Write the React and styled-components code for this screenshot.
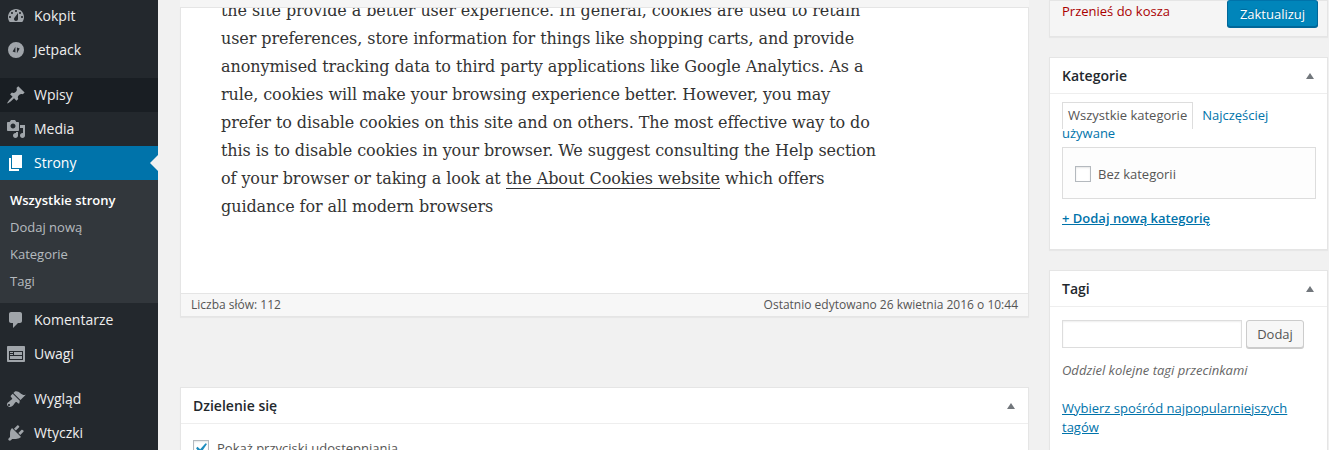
import React from 'react';
import styled, { createGlobalStyle } from 'styled-components';

const GlobalStyle = createGlobalStyle`
  html, body {
    margin: 0;
    padding: 0;
    background: #f1f1f1;
  }
  body {
    font-family: "Open Sans", sans-serif;
    font-size: 13px;
    color: #444;
  }
`;

const Page = styled.div`
  display: flex;
  height: 450px;
  overflow: hidden;
`;

const Sidebar = styled.nav`
  flex: 0 0 158px;
  background: #23282d;
`;

const MenuItem = styled.a`
  position: relative;
  display: flex;
  align-items: center;
  height: 34px;
  box-sizing: border-box;
  padding-bottom: 2px;
  margin-top: ${(p) => p.$gap || 0}px;
  background: ${(p) => (p.$current ? '#0073aa' : p.$hover ? '#191e23' : 'transparent')};
  color: ${(p) => (p.$current ? '#fff' : '#eee')};
  font-size: 14px;
  svg {
    flex: 0 0 20px;
    margin: 2px 8px 0 6px;
    fill: ${(p) => (p.$current ? '#fff' : '#a0a5aa')};
  }
  ${(p) => p.$current && `
    &::after {
      content: '';
      position: absolute;
      right: 0;
      top: 9px;
      border: 8px solid transparent;
      border-right-color: #f1f1f1;
      border-left: 0;
    }
  `}
`;

const SubMenu = styled.div`
  display: flex;
  flex-direction: column;
  padding: 7px 0 8px;
  background: #32373c;
`;

const SubItem = styled.a`
  padding-left: 10px;
  height: 27px;
  line-height: 27px;
  font-size: 13px;
  font-weight: ${(p) => (p.$current ? 600 : 400)};
  color: ${(p) => (p.$current ? '#fff' : 'rgba(240,245,250,.7)')};
`;

const Main = styled.main`
  flex: 1;
  display: flex;
  align-items: flex-start;
  gap: 20px;
  padding-left: 22px;
`;

const Column = styled.div`
  flex: 0 0 ${(p) => p.$width}px;
  display: flex;
  flex-direction: column;
`;

const EditorWrap = styled.div`
  border: 1px solid #e5e5e5;
  border-top: 0;
  background: #fff;
  box-shadow: 0 1px 1px rgba(0, 0, 0, .04);
`;

const ToolbarEdge = styled.div`
  height: 7px;
  background: #f5f5f5;
  border-bottom: 1px solid #e5e5e5;
`;

const EditorBody = styled.div`
  height: 285px;
  overflow: hidden;
  padding-left: 40px;
`;

const Copy = styled.p`
  margin: -11px 0 0;
  font-family: "DejaVu Serif", serif;
  font-size: 16px;
  line-height: 28px;
  letter-spacing: -0.08px;
  color: #333;
  white-space: nowrap;
  a {
    color: #333;
    border-bottom: 1px solid #333;
  }
`;

const StatusBar = styled.div`
  display: flex;
  justify-content: space-between;
  box-sizing: border-box;
  height: 23px;
  padding: 0 10px;
  line-height: 22px;
  font-size: 12px;
  color: #555;
  background: #f7f7f7;
  border-top: 1px solid #e5e5e5;
`;

const Box = styled.section`
  margin-top: ${(p) => p.$top || 0}px;
  background: ${(p) => p.$bg || '#fff'};
  border: 1px solid #e5e5e5;
  box-shadow: 0 1px 1px rgba(0, 0, 0, .04);
`;

const BoxHead = styled.header`
  display: flex;
  align-items: center;
  justify-content: space-between;
  height: 35px;
  padding: 0 13px 0 12px;
  border-bottom: 1px solid #eee;
  font-size: 14px;
  font-weight: 600;
  color: #23282d;
`;

const Caret = styled.span`
  width: 0;
  height: 0;
  border-left: 4px solid transparent;
  border-right: 4px solid transparent;
  border-bottom: 6px solid #72777c;
`;

const PublishRow = styled.div`
  display: flex;
  align-items: flex-start;
  justify-content: space-between;
  height: 35px;
  padding: 0 9px 0 12px;
`;

const TrashLink = styled.a`
  margin-top: 1px;
  color: #a00;
  font-size: 13px;
  line-height: 19px;
`;

const PrimaryButton = styled.button`
  width: 91px;
  height: 27px;
  margin-top: -1px;
  padding: 0;
  font: 13px "Open Sans", sans-serif;
  color: #fff;
  background: #0085ba;
  border: 1px solid;
  border-color: #0073aa #006799 #006799;
  border-radius: 3px;
  box-shadow: 0 1px 0 #006799;
  text-shadow: 0 -1px 1px #006799;
`;

const BoxBody = styled.div`
  padding: ${(p) => p.$top}px 11px ${(p) => p.$bottom}px 12px;
`;

const Tabs = styled.div`
  line-height: 18px;
  color: #0073aa;
  font-size: 13px;
`;

const ActiveTab = styled.span`
  padding: 3px 5px 5px;
  color: #555;
  background: #fff;
  border: 1px solid #ddd;
  border-bottom: 0;
`;

const TabLink = styled.a`
  margin-left: 9px;
`;

const CatList = styled.div`
  display: flex;
  align-items: center;
  gap: 7px;
  height: 49px;
  margin-top: 5px;
  padding: 1px 0 0 12px;
  box-sizing: content-box;
  background: #fdfdfd;
  border: 1px solid #ddd;
  color: #555;
`;

const Check = styled.span`
  display: inline-flex;
  flex: 0 0 16px;
  width: 16px;
  height: 16px;
  box-sizing: border-box;
  background: #fff;
  border: 1px solid #b4b9be;
  box-shadow: inset 0 1px 2px rgba(0, 0, 0, .1);
  svg {
    flex: 0 0 21px;
    margin: -3px 0 0 -4px;
    fill: #1e8cbe;
  }
`;

const StrongLink = styled.a`
  display: block;
  margin-top: 10px;
  color: #0073aa;
  font-weight: 600;
  text-decoration: underline;
  line-height: 18px;
`;

const TagRow = styled.div`
  display: flex;
  gap: 4px;
`;

const TagInput = styled.input`
  width: 180px;
  height: 28px;
  box-sizing: border-box;
  background: #fff;
  border: 1px solid #ddd;
  box-shadow: inset 0 1px 2px rgba(0, 0, 0, .07);
  outline: 0;
`;

const GhostButton = styled.button`
  width: 58px;
  height: 28px;
  padding: 0;
  font: 13px "Open Sans", sans-serif;
  color: #555;
  background: #f7f7f7;
  border: 1px solid #ccc;
  border-radius: 3px;
  box-shadow: 0 1px 0 #ccc;
`;

const Hint = styled.p`
  margin: 13px 0 0;
  line-height: 18px;
  font-style: italic;
  color: #666;
  font-size: 13px;
`;

const TagLink = styled.a`
  display: block;
  margin-top: 20px;
  line-height: 19px;
  color: #0073aa;
  text-decoration: underline;
`;

const ShareBody = styled.label`
  display: flex;
  align-items: center;
  gap: 8px;
  padding: 15px 12px;
  color: #555;
`;

const Icon = ({ d }) => (
  <svg width="20" height="20" viewBox="0 0 20 20" aria-hidden="true">
    <path fillRule="evenodd" d={d} />
  </svg>
);

const ICONS = {
  dashboard: 'M3.76 16h12.48c1.1-1.37 1.76-3.11 1.76-5 0-4.42-3.58-8-8-8s-8 3.58-8 8c0 1.89.66 3.63 1.76 5zM10 4c.55 0 1 .45 1 1s-.45 1-1 1-1-.45-1-1 .45-1 1-1zM6 6c.55 0 1 .45 1 1s-.45 1-1 1-1-.45-1-1 .45-1 1-1zm8 0c.55 0 1 .45 1 1s-.45 1-1 1-1-.45-1-1 .45-1 1-1zm-5.37 5.55L12 7v6c0 1.1-.9 2-2 2s-2-.9-2-2c0-.57.24-1.08.63-1.45zM4 10c.55 0 1 .45 1 1s-.45 1-1 1-1-.45-1-1 .45-1 1-1zm12 0c.55 0 1 .45 1 1s-.45 1-1 1-1-.45-1-1 .45-1 1-1z',
  jetpack: 'M10 2a8 8 0 1 0 0 16 8 8 0 0 0 0-16zM9.4 6.8v5.6L6.6 11.4zM10.9 13.2V7.6l2.8 1z',
  post: 'M10.44 3.02l1.82-1.82 6.36 6.35-1.83 1.82c-1.05-.68-2.48-.57-3.41.36l-.75.75c-.92.93-1.04 2.35-.35 3.41l-1.83 1.82-2.41-2.41-2.8 2.79c-.42.42-3.38 2.71-3.8 2.29s1.86-3.39 2.28-3.81l2.79-2.79L4.1 9.36l1.83-1.82c1.05.69 2.48.57 3.4-.36l.75-.75c.93-.92 1.05-2.35.36-3.41z',
  media: 'M13 11V4c0-.55-.45-1-1-1h-1.67L9 1H5L3.67 3H2c-.55 0-1 .45-1 1v7c0 .55.45 1 1 1h10c.55 0 1-.45 1-1zM7 4.5c1.38 0 2.5 1.12 2.5 2.5S8.38 9.5 7 9.5 4.5 8.38 4.5 7 5.62 4.5 7 4.5zM14 6h5v10.5c0 1.38-1.12 2.5-2.5 2.5S14 17.88 14 16.5s1.12-2.5 2.5-2.5c.17 0 .34.02.5.05V9h-3V6zm-4 8.05V13h2v3.5c0 1.38-1.12 2.5-2.5 2.5S7 17.88 7 16.5 8.12 14 9.5 14c.17 0 .34.02.5.05z',
  page: 'M6 15V2h10v13H6zm-1 1h8v2H3V5h2v11z',
  comments: 'M5 2h9c1.1 0 2 .9 2 2v7c0 1.1-.9 2-2 2h-2l-5 5v-5H5c-1.1 0-2-.9-2-2V4c0-1.1.9-2 2-2z',
  feedback: 'M2 2h16c.55 0 1 .45 1 1v14c0 .55-.45 1-1 1H2c-.55 0-1-.45-1-1V3c0-.55.45-1 1-1zm15 14V7H3v9h14zM4 8v1h3V8H4zm4 0v3h8V8H8zm-4 2v1h3v-1H4zm0 2v3h12v-3H4z',
  brush: 'M14.48 11.06L7.41 3.99l1.5-1.5c.5-.56 2.3-.47 3.51.32 1.21.8 1.43 1.28 2.91 2.1 1.18.64 2.45 1.26 4.45.85zm-.71.71L6.7 4.7 4.93 6.47c-.39.39-.39 1.02 0 1.41l1.06 1.06c.39.39.39 1.03 0 1.42-.6.6-1.43 1.11-2.21 1.69-.35.26-.7.53-1.01.84C1.43 13.23.28 15.2 1.82 17c1.57 1.77 3.87.76 5.14-.51.31-.31.58-.66.84-1.01.58-.78 1.09-1.61 1.69-2.21.39-.39 1.03-.39 1.42 0l1.06 1.06c.39.39 1.02.39 1.41 0zM3 17c-.6 0-1-.4-1-1s.4-1 1-1 1 .4 1 1-.4 1-1 1z',
  plugin: 'M13.11 4.36L9.87 7.6 8 5.73l3.24-3.24c.35-.34 1.05-.2 1.56.32.52.51.66 1.21.31 1.55zm-8 1.77l.91-1.12 9.01 9.01-1.19.84c-.71.71-2.63 1.16-3.82 1.16H6.14L4.9 17.26c-.59.59-1.54.59-2.12 0-.59-.58-.59-1.53 0-2.12l1.24-1.24v-3.88c0-1.13.4-3.19 1.09-3.89zm7.26 3.97l3.24-3.24c.34-.35 1.04-.21 1.55.31.52.51.66 1.21.31 1.55l-3.24 3.25z',
};

const App = () => (
  <Page>
    <GlobalStyle />
    <Sidebar>
      <MenuItem $gap={-1}><Icon d={ICONS.dashboard} />Kokpit</MenuItem>
      <MenuItem><Icon d={ICONS.jetpack} />Jetpack</MenuItem>
      <MenuItem $gap={11} $hover><Icon d={ICONS.post} />Wpisy</MenuItem>
      <MenuItem><Icon d={ICONS.media} />Media</MenuItem>
      <MenuItem $current><Icon d={ICONS.page} />Strony</MenuItem>
      <SubMenu>
        <SubItem $current>Wszystkie strony</SubItem>
        <SubItem>Dodaj nową</SubItem>
        <SubItem>Kategorie</SubItem>
        <SubItem>Tagi</SubItem>
      </SubMenu>
      <MenuItem><Icon d={ICONS.comments} />Komentarze</MenuItem>
      <MenuItem><Icon d={ICONS.feedback} />Uwagi</MenuItem>
      <MenuItem $gap={11}><Icon d={ICONS.brush} />Wygląd</MenuItem>
      <MenuItem><Icon d={ICONS.plugin} />Wtyczki</MenuItem>
    </Sidebar>
    <Main>
      <Column $width={849}>
        <ToolbarEdge />
        <EditorWrap>
          <EditorBody>
            <Copy>
              the site provide a better user experience. In general, cookies are used to retain<br />
              user preferences, store information for things like shopping carts, and provide<br />
              anonymised tracking data to third party applications like Google Analytics. As a<br />
              rule, cookies will make your browsing experience better. However, you may<br />
              prefer to disable cookies on this site and on others. The most effective way to do<br />
              this is to disable cookies in your browser. We suggest consulting the Help section<br />
              of your browser or taking a look at <a>the About Cookies website</a> which offers<br />
              guidance for all modern browsers
            </Copy>
          </EditorBody>
          <StatusBar>
            <span>Liczba słów: 112</span>
            <span>Ostatnio edytowano 26 kwietnia 2016 o 10:44</span>
          </StatusBar>
        </EditorWrap>
        <Box $top={70}>
          <BoxHead>Dzielenie się<Caret /></BoxHead>
          <ShareBody>
            <Check>
              <svg width="21" height="21" viewBox="0 0 20 20" aria-hidden="true">
                <path d="M14.83 4.89l1.34.94-5.81 8.38H9.02L5.78 9.67l1.34-1.25 2.57 2.4z" />
              </svg>
            </Check>
            Pokaż przyciski udostępniania
          </ShareBody>
        </Box>
      </Column>
      <Column $width={279}>
        <Box $bg="#f5f5f5">
          <PublishRow>
            <TrashLink>Przenieś do kosza</TrashLink>
            <PrimaryButton>Zaktualizuj</PrimaryButton>
          </PublishRow>
        </Box>
        <Box $top={20}>
          <BoxHead>Kategorie<Caret /></BoxHead>
          <BoxBody $top={12} $bottom={22}>
            <Tabs>
              <ActiveTab>Wszystkie kategorie</ActiveTab>
              <TabLink>Najczęściej używane</TabLink>
            </Tabs>
            <CatList><Check />Bez kategorii</CatList>
            <StrongLink>+ Dodaj nową kategorię</StrongLink>
          </BoxBody>
        </Box>
        <Box $top={20}>
          <BoxHead>Tagi<Caret /></BoxHead>
          <BoxBody $top={13} $bottom={30}>
            <TagRow>
              <TagInput />
              <GhostButton>Dodaj</GhostButton>
            </TagRow>
            <Hint>Oddziel kolejne tagi przecinkami</Hint>
            <TagLink>Wybierz spośród najpopularniejszych tagów</TagLink>
          </BoxBody>
        </Box>
      </Column>
    </Main>
  </Page>
);

export default App;
